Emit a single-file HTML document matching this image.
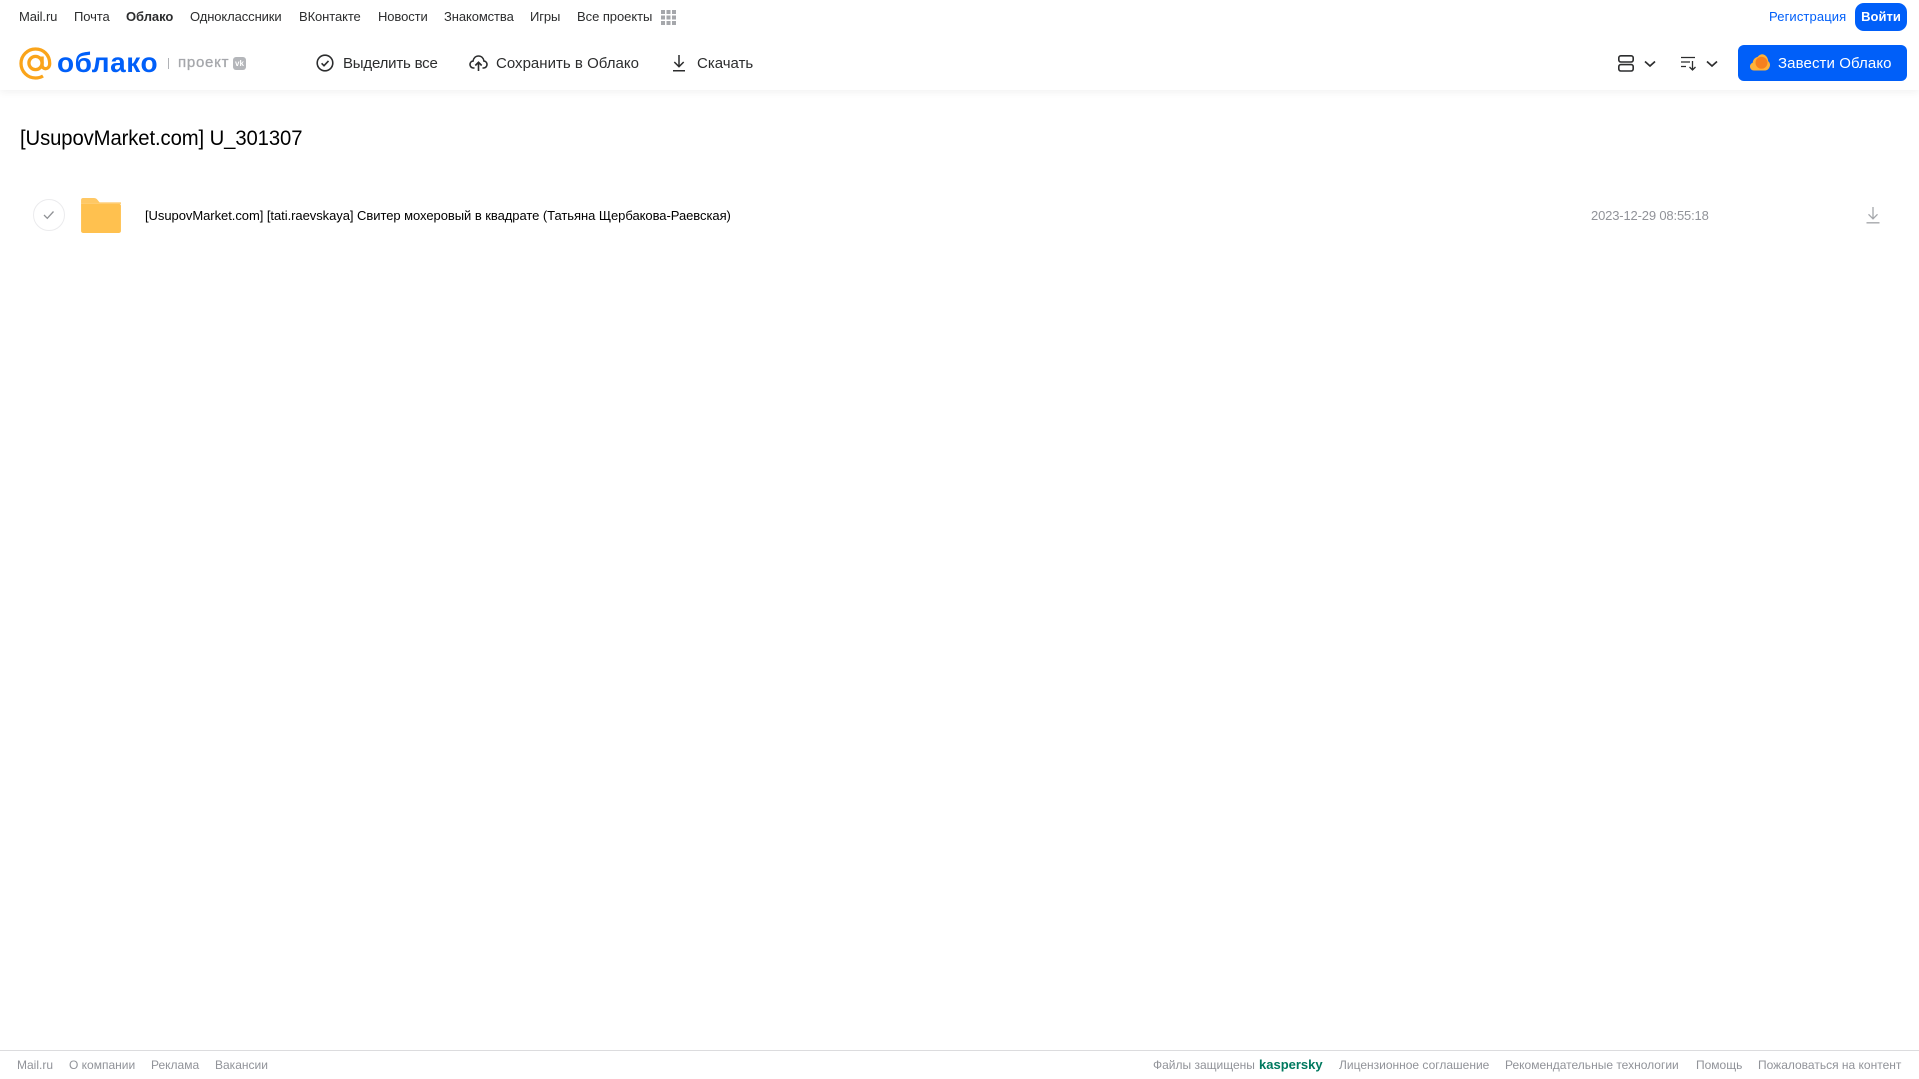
<!DOCTYPE html>
<html lang="ru"><head><meta charset="utf-8"><title>Облако</title>
<style>
html,body{margin:0;padding:0;background:#fff}
body{width:1919px;height:1079px;position:relative;overflow:hidden;font-family:"Liberation Sans",Arial,sans-serif}
.t{position:absolute;white-space:nowrap;line-height:20px}
.n{top:7px;font-size:13px;color:#2c2d2e;letter-spacing:-.1px}
.b{top:54px;font-size:15px;color:#2c2d2e}
.f{top:1055px;font-size:12px;color:#919399;letter-spacing:0}
svg{position:absolute;overflow:visible}
</style></head><body>
<div style="position:absolute;left:0;top:0;width:1919px;height:90px;background:#fff;box-shadow:0 2px 8px rgba(0,0,0,.06)"></div>

<span class="t n" style="left:19px">Mail.ru</span>
<span class="t n" style="left:74px">Почта</span>
<span class="t n" style="left:126px;font-weight:bold;letter-spacing:-.05px">Облако</span>
<span class="t n" style="left:190px">Одноклассники</span>
<span class="t n" style="left:299px">ВКонтакте</span>
<span class="t n" style="left:378px">Новости</span>
<span class="t n" style="left:444px">Знакомства</span>
<span class="t n" style="left:530px">Игры</span>
<span class="t n" style="left:577px;letter-spacing:-.05px">Все проекты</span>
<svg style="left:661px;top:10px" width="15" height="15" fill="#a5a7ab"><rect x="0" y="0" width="4" height="4"/><rect x="5.500" y="0" width="4" height="4"/><rect x="11" y="0" width="4" height="4"/><rect x="0" y="5.500" width="4" height="4"/><rect x="5.500" y="5.500" width="4" height="4"/><rect x="11" y="5.500" width="4" height="4"/><rect x="0" y="11" width="4" height="4"/><rect x="5.500" y="11" width="4" height="4"/><rect x="11" y="11" width="4" height="4"/></svg>

<span class="t n" style="left:1769px;color:#005ff9;letter-spacing:.12px">Регистрация</span>
<div style="position:absolute;left:1855px;top:3px;width:52px;height:28px;border-radius:9px;background:#005ff9;color:#fff;font-size:13px;font-weight:bold;text-align:center;line-height:28px">Войти</div>

<svg style="left:19px;top:47px" width="33" height="33" viewBox="0 0 33 33" fill="none" stroke="#faa41a" stroke-width="3.300"><circle cx="16.500" cy="16" r="6.600"/><path d="M23.100 9.500v8.600c0 5 7.600 5 7.600-1.600C30.700 8 24.500 2 16.500 2 8.500 2 2 8.500 2 16.500S8.500 31 16.500 31c3 0 5.500-.8 7.500-2"/></svg>
<span class="t" style="left:57px;top:44px;line-height:38px;font-size:28px;font-weight:bold;color:#005ff9;letter-spacing:.55px">облако</span>
<div style="position:absolute;left:168px;top:58px;width:1px;height:11px;background:#b0b2b6"></div>
<span class="t" style="left:178px;top:53px;font-size:15px;color:#a5a7ab;letter-spacing:.75px;-webkit-text-stroke:.3px #a5a7ab">проект</span>
<div style="position:absolute;left:233px;top:57px;width:13px;height:13px;border-radius:3px;background:#b4b6ba;color:#fff;font-size:8px;font-weight:bold;line-height:13px;text-align:center">vk</div>

<svg style="left:316px;top:54px" width="18" height="18" viewBox="0 0 18 18" fill="none" stroke="#2c2d2e" stroke-width="1.600"><circle cx="9" cy="9" r="7.800"/><path d="M5.600 9.300l2.400 2.400 4.500-4.800"/></svg>
<span class="t b" style="left:343px;letter-spacing:-.2px">Выделить все</span>
<svg style="left:469px;top:54px" width="19" height="18" viewBox="0 0 19 18" fill="none" stroke="#2c2d2e" stroke-width="1.600"><path d="M5.500 14H4.500C2.500 14 1 12.500 1 10.500c0-1.800 1.300-3.200 3-3.400C4.600 4 6.800 2 9.500 2s4.900 2 5.500 5.100c1.700.2 3 1.600 3 3.400 0 2-1.500 3.500-3.500 3.500h-1"/><path d="M9.500 17V8.500M6.300 11.500l3.200-3.200 3.200 3.200"/></svg>
<span class="t b" style="left:496px;letter-spacing:.02px">Сохранить в Облако</span>
<svg style="left:671px;top:54px" width="16" height="18" viewBox="0 0 16 18" fill="none" stroke="#2c2d2e" stroke-width="1.500"><path d="M8 1v11.500M3.300 8l4.700 4.700L12.700 8M2 16.800h12"/></svg>
<span class="t b" style="left:697px;letter-spacing:0">Скачать</span>

<svg style="left:1618px;top:55px" width="16" height="17" viewBox="0 0 16 17" fill="none" stroke="#2c2d2e" stroke-width="1.600"><rect x=".8" y=".8" width="14.400" height="6.200" rx="2"/><rect x=".8" y="9.600" width="14.400" height="6.400" rx="2"/></svg>
<svg style="left:1644px;top:60px" width="12" height="8" viewBox="0 0 12 8" fill="none" stroke="#2c2d2e" stroke-width="1.700"><path d="M1 1.500l5 4.500 5-4.500"/></svg>
<svg style="left:1681px;top:56px" width="17" height="15" viewBox="0 0 17 15" fill="none" stroke="#2c2d2e" stroke-width="1.300"><path d="M0 1.500h14M0 6h9M0 10.500h5M11.500 5v9M8.500 11l3 3 3-3"/></svg>
<svg style="left:1706px;top:60px" width="12" height="8" viewBox="0 0 12 8" fill="none" stroke="#2c2d2e" stroke-width="1.700"><path d="M1 1.500l5 4.500 5-4.500"/></svg>

<div style="position:absolute;left:1738px;top:45px;width:169px;height:36px;border-radius:6px;background:#005ff9"></div>
<svg style="left:1750px;top:54px" width="20" height="17" viewBox="0 0 20 17"><path d="M4 16.500C1.800 16.500 0 14.800 0 12.500c0-1.800 1.100-3.300 2.700-3.800C3 5.800 4.800 3.500 7.500 3c1.200-1.700 3.200-2.800 4.500-2.800 3 0 6.200 3 6.200 7 1.100.8 1.800 2 1.800 3.600 0 3-2.200 5.700-5 5.700z" fill="#ffb238"/><circle cx="11.500" cy="8.800" r="6" fill="#f5801f"/></svg>
<span class="t" style="left:1778px;top:54px;font-size:15px;color:#fff;letter-spacing:.1px">Завести Облако</span>

<span class="t" style="left:20px;top:127px;line-height:24px;font-size:21px;color:#000;letter-spacing:-.1px;transform:scaleX(.965);transform-origin:0 0">[UsupovMarket.com] U_301307</span>

<div style="position:absolute;left:33px;top:199px;width:30px;height:30px;border:1px solid #ebebed;border-radius:50%"></div>
<svg style="left:43px;top:210px" width="12" height="10" viewBox="0 0 12 10" fill="none" stroke="#909296" stroke-width="1.300"><path d="M1 5l3.300 3.300L10.500 1.500"/></svg>
<svg style="left:81px;top:198px" width="40" height="35" viewBox="0 0 41 36"><path d="M2 0h11c2 0 3 .8 4 2l2 2.500H41V6H0V2C0 .8 .8 0 2 0z" fill="#ffc864"/><path d="M0 6h39c1.200 0 2 .8 2 2v26c0 1.200-.8 2-2 2H2c-1.200 0-2-.8-2-2z" fill="#ffc14f"/></svg>
<span class="t" style="left:145px;top:206px;font-size:13px;color:#000;letter-spacing:-.05px">[UsupovMarket.com] [tati.raevskaya] Свитер мохеровый в квадрате (Татьяна Щербакова-Раевская)</span>
<span class="t" style="left:1591px;top:206px;font-size:13px;color:#919399;letter-spacing:-.16px">2023-12-29 08:55:18</span>
<svg style="left:1866px;top:207px" width="14" height="17" viewBox="0 0 14 17" fill="none" stroke="#a5a7ab" stroke-width="1.300"><path d="M7 0v11.500M2.500 7.300L7 11.800l4.500-4.500M.5 15.800h13"/></svg>

<div style="position:absolute;left:0;top:1050px;width:1919px;height:1px;background:#dcdcde"></div>
<span class="t f" style="left:17px">Mail.ru</span>
<span class="t f" style="left:69px">О компании</span>
<span class="t f" style="left:151px">Реклама</span>
<span class="t f" style="left:215px">Вакансии</span>
<span class="t f" style="left:1153px">Файлы защищены</span>
<span class="t f" style="left:1259px;font-size:13px;font-weight:bold;color:#00795f">kaspersky</span>
<span class="t f" style="left:1339px">Лицензионное соглашение</span>
<span class="t f" style="left:1505px">Рекомендательные технологии</span>
<span class="t f" style="left:1696px">Помощь</span>
<span class="t f" style="left:1758px">Пожаловаться на контент</span>
</body></html>
